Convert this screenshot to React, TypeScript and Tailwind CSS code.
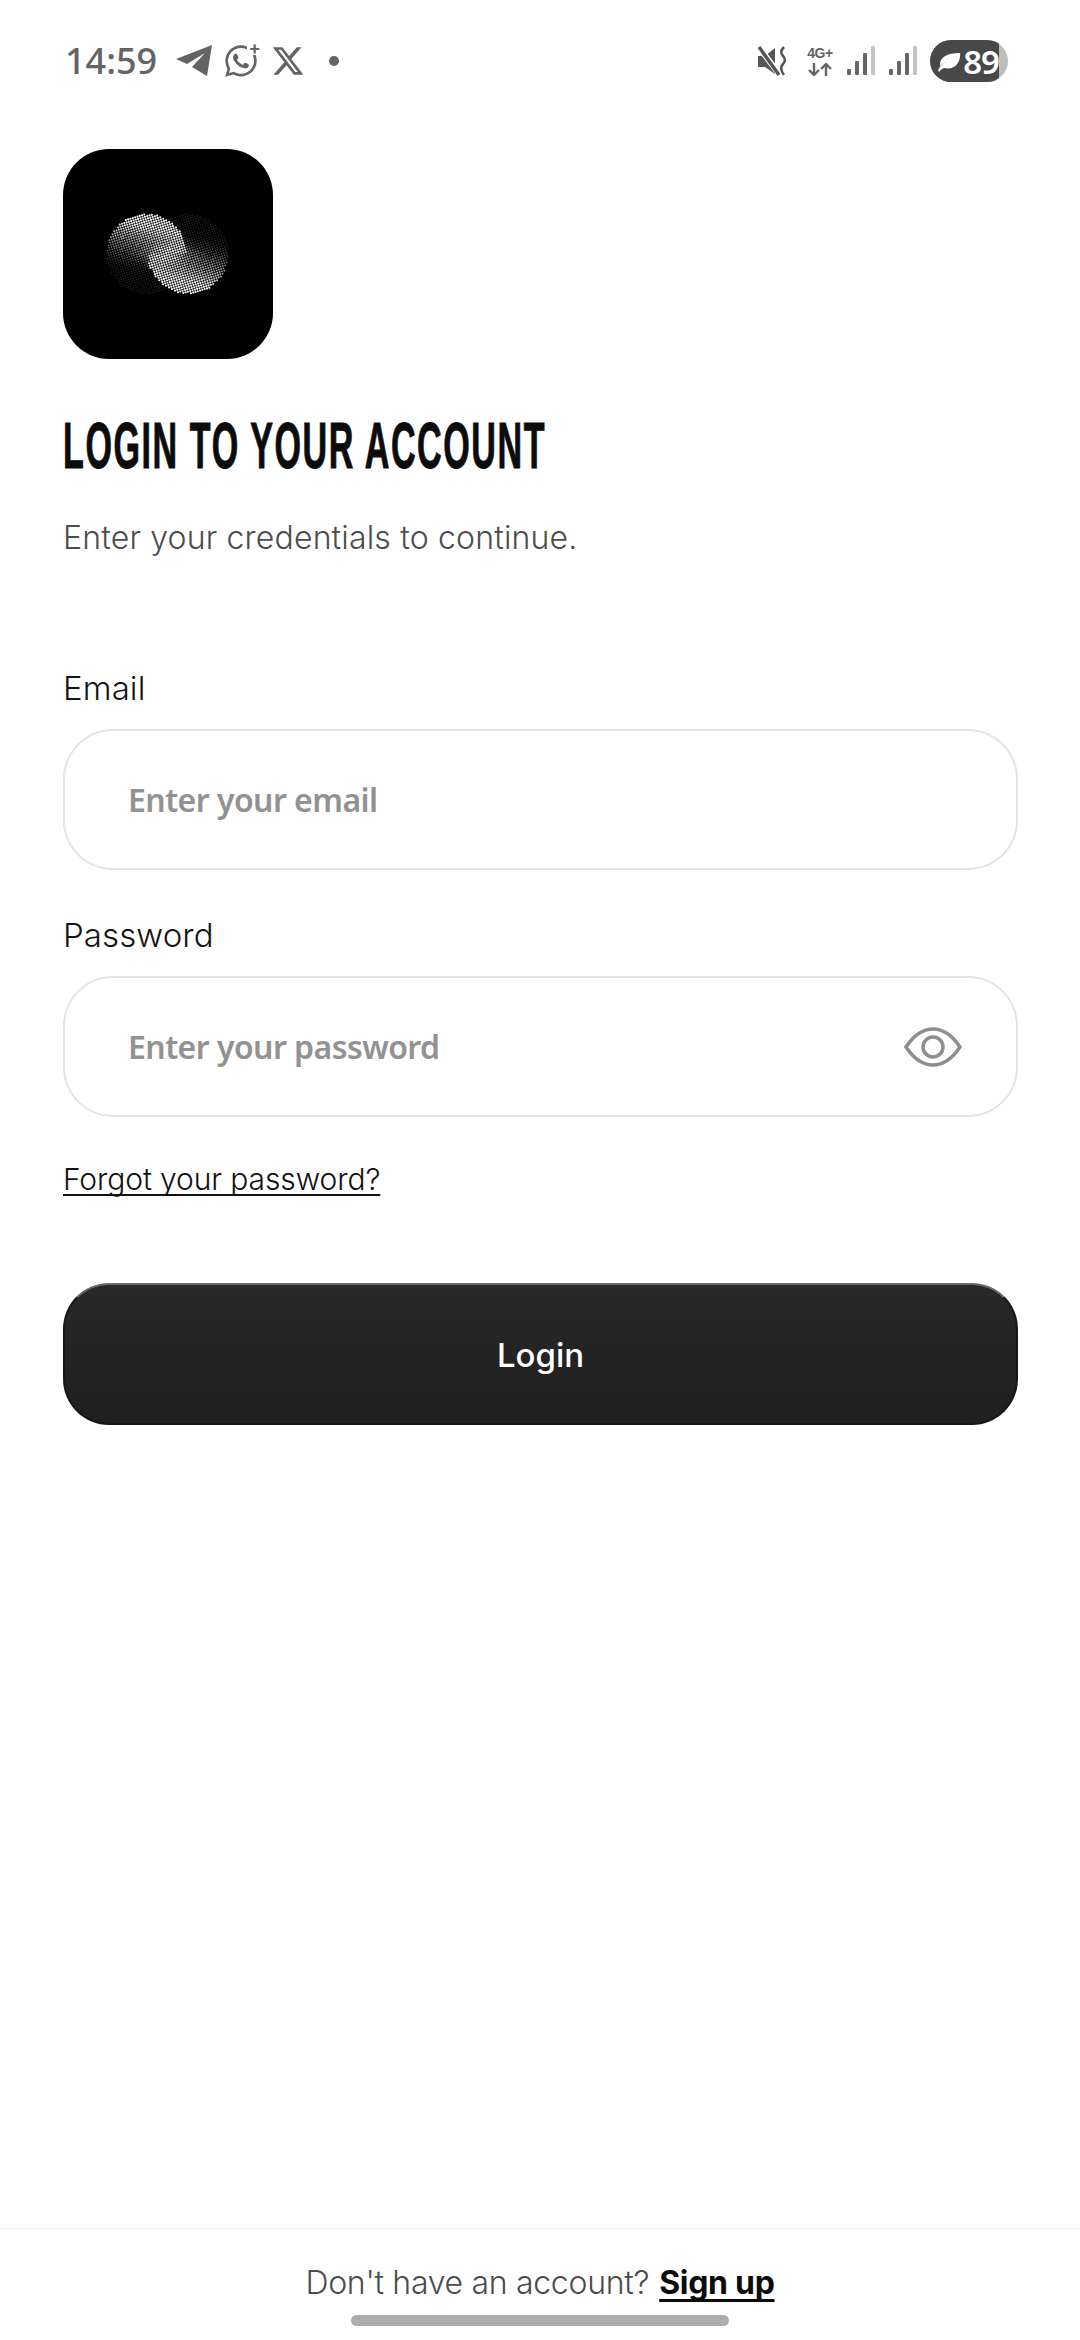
import React, { useMemo } from "react";
import { FaWhatsapp, FaXTwitter } from "react-icons/fa6";

const clamp = (v: number) => Math.max(0, Math.min(1, v));

// dotted two-circle mark in the app icon
const LogoMark = () => {
  const dots = useMemo(() => {
    const out: { x: number; y: number; o: number; r: number }[] = [];
    const lc = { x: 41.7, y: 42, r: 40 };
    const rc = { x: 83, y: 42, r: 40 };
    const shade = (dx: number, dy: number) =>
      0.5 + ((-dy * 0.9 + dx * 0.25) / 40) * 0.8;
    for (let i = -30; i < 90; i++) {
      for (let j = -30; j < 90; j++) {
        const x = i * 2.3 + j * 0.7;
        const y = j * 2.3 - i * 0.7 + 22;
        const inL = Math.hypot(x - lc.x, y - lc.y) <= lc.r;
        const inR = Math.hypot(x - rc.x, y - rc.y) <= rc.r;
        if (!inL && !inR) continue;
        const useLeft = y < 42 ? inL : !inR;
        const b = useLeft
          ? shade(x - lc.x, y - lc.y)
          : shade(rc.x - x, rc.y - y);
        const glow = 0.35 * Math.exp(-((x - 62) ** 2 / 500 + (y - 42) ** 2 / 90));
        const v = clamp(b + glow);
        out.push({ x, y, o: Math.max(0.16, v), r: 0.65 + v * 0.42 });
      }
    }
    return out;
  }, []);
  return (
    <svg width="126" height="84" viewBox="0 0 126 84">
      {dots.map((d, i) => (
        <circle key={i} cx={d.x} cy={d.y} r={d.r} fill="#fff" opacity={d.o} />
      ))}
    </svg>
  );
};

const Signal = () => (
  <svg width="29" height="30" viewBox="0 0 29 30">
    <rect x="0" y="23" width="4" height="6" rx="1" fill="#666" />
    <rect x="8" y="15" width="4" height="14" rx="1" fill="#666" />
    <rect x="16" y="7" width="4" height="22" rx="1" fill="#666" />
    <rect x="24" y="0" width="4" height="29" rx="1" fill="#c4c4c4" />
  </svg>
);

const StatusBar = () => (
  <div className="h-[122px] flex items-center justify-between pl-[65px] pr-[72px] text-[#646464]">
    <div className="flex items-center">
      <span className="w-[95px] text-[36px] font-medium leading-none font-['Noto_Sans',sans-serif]">
        14:59
      </span>
      <svg className="ml-[15px]" width="38" height="32" viewBox="0 0 38 32">
        <path d="M1 14 L37 0 L32 31 L17 22 L30 8 L12 19 Z" fill="#646464" />
      </svg>
      <div className="relative ml-[10px] w-[36px] h-[36px]">
        <FaWhatsapp size={36} color="#646464" />
        <span className="absolute -top-[3px] -right-[3px] w-[15px] h-[15px] bg-white flex items-center justify-center text-[18px] font-bold leading-none">
          +
        </span>
      </div>
      <FaXTwitter className="ml-[12px]" size={34} color="#646464" />
      <span className="ml-[24px] w-[10px] h-[10px] rounded-full bg-[#646464]" />
    </div>
    <div className="flex items-center">
      <svg width="30" height="30" viewBox="0 0 30 30" fill="none">
        <path d="M0 10 H7 L17 2 V28 L7 21 H0 Z" fill="#555" />
        <path d="M0 0 L21 28" stroke="#fff" strokeWidth="6" />
        <path d="M1 1 L21 29" stroke="#555" strokeWidth="3.5" />
        <path d="M26 1 Q21 6 25 10 Q29 14 25 18 Q21 22 26 29" stroke="#555" strokeWidth="2.5" />
      </svg>
      <div className="ml-[16px] w-[32px] h-[30px] flex flex-col items-center justify-between font-['Liberation_Sans',sans-serif] font-bold text-[#666]">
        <span className="text-[14px] leading-[14px] tracking-[-0.5px]">4G+</span>
        <svg width="28" height="13" viewBox="0 0 28 13" fill="none" stroke="#666" strokeWidth="2.4">
          <path d="M8 0 V11 M3 7 L8 12 L13 7" />
          <path d="M20 13 V2 M15 6 L20 1 L25 6" />
        </svg>
      </div>
      <div className="ml-[11px]"><Signal /></div>
      <div className="ml-[13px]"><Signal /></div>
      <div className="relative ml-[12px] w-[78px] h-[42px] rounded-full bg-[#bdbdbd] overflow-hidden">
        <div className="w-[69px] h-full bg-[#484848] flex items-center pl-[7px] text-white">
          <svg width="26" height="26" viewBox="0 0 24 24" fill="#fff">
            <path d="M1 21 C3 17 5 15 9 13 C6 14 4 16 3 17 C2 8 10 4 23 4 C23 14 18 21 7 19 C5 20 3 21 2 23 Z" />
          </svg>
          <span className="ml-[2px] text-[33px] font-semibold leading-none tracking-[-1px] font-['Noto_Sans',sans-serif]">89</span>
        </div>
      </div>
    </div>
  </div>
);

const Field = ({ label, placeholder, eye }: { label: string; placeholder: string; eye?: boolean }) => (
  <>
    <div className="h-[40px] pt-[2px] flex items-center text-[33px] text-[#141414] font-light font-['Inter',sans-serif] tracking-[0.1px]">
      {label}
    </div>
    <div className="mt-[21px] h-[141px] rounded-[50px] border-2 border-[#e4e4e4] pl-[63px] pr-[54px] flex items-center justify-between">
      <span className="text-[32px] font-semibold text-[#929292] font-['Noto_Sans',sans-serif] tracking-[-0.55px]">
        {placeholder}
      </span>
      {eye && (
        <svg width="58" height="40" viewBox="0 0 58 40" fill="none" stroke="#8e8e8e" strokeWidth="3.5">
          <path d="M2 20 C10 8 20 2 29 2 C38 2 48 8 56 20 C48 32 38 38 29 38 C20 38 10 32 2 20 Z" />
          <circle cx="29" cy="20" r="10" />
        </svg>
      )}
    </div>
  </>
);

export default function App() {
  return (
    <div className="w-[1080px] h-[2340px] bg-white flex flex-col overflow-hidden font-['Inter',sans-serif]">
      <StatusBar />
      <div className="pl-[63px] pr-[62px] flex flex-col">
        <div className="mt-[27px] w-[210px] h-[210px] rounded-[46px] bg-black flex items-center justify-center">
          <LogoMark />
        </div>
        <div className="mt-[55px] h-[64px] flex items-center">
          <h1 className="text-[64px] font-bold leading-none whitespace-nowrap text-[#0c0c0c] origin-left scale-x-[0.532] [-webkit-text-stroke:1px_#0c0c0c] tracking-[3px] font-['Liberation_Sans',sans-serif]">
            LOGIN TO YOUR ACCOUNT
          </h1>
        </div>
        <p className="mt-[40px] h-[40px] flex items-center text-[32px] text-[#4c4c4c] tracking-[0.17px] font-light">
          Enter your credentials to continue.
        </p>
        <div className="mt-[110px]">
          <Field label="Email" placeholder="Enter your email" />
        </div>
        <div className="mt-[45px]">
          <Field label="Password" placeholder="Enter your password" eye />
        </div>
        <div className="mt-[42px] h-[40px] flex items-center">
          <a className="text-[30px] text-[#111] font-light underline underline-offset-[4px] decoration-2 [text-decoration-skip-ink:none] tracking-[-0.1px]">
            Forgot your password?
          </a>
        </div>
        <button className="mt-[84px] h-[142px] pt-[3px] rounded-[46px] bg-gradient-to-b from-[#282828] to-[#1f1f1f] border-2 border-[#171717] border-t-[#6a6a6a] text-white text-[33px] font-medium">
          Login
        </button>
      </div>
      <div className="mt-auto border-t border-[#f2f2f2] flex flex-col items-center pt-[34px]">
        <div className="h-[40px] flex items-center text-[32px] text-[#4c4c4c] tracking-[-0.3px] font-light whitespace-nowrap">
          Don't have an account?
          <a className="ml-[10px] font-bold text-[#0c0c0c] underline underline-offset-[5px] [text-decoration-skip-ink:none]">Sign up</a>
        </div>
        <div className="mt-[12px] mb-[14px] w-[378px] h-[11px] rounded-full bg-[#adadad]" />
      </div>
    </div>
  );
}
